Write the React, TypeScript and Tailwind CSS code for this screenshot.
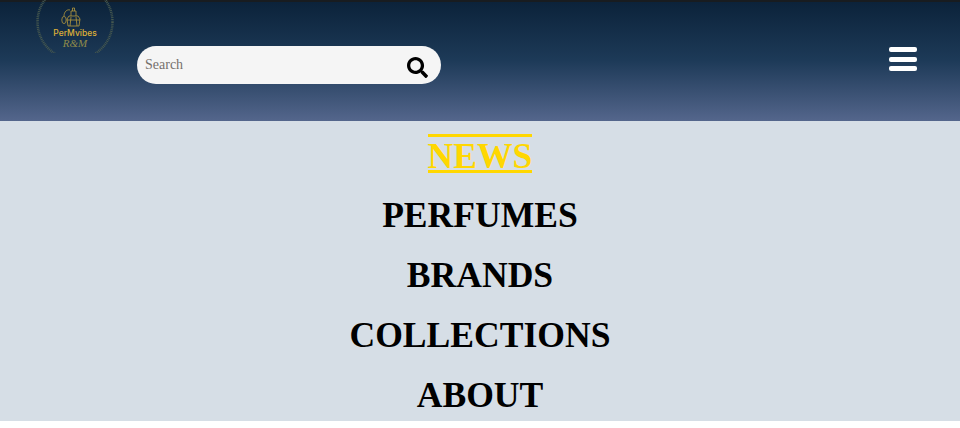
import React from 'react';
import { FaSearch } from 'react-icons/fa';

const links = ['PERFUMES', 'BRANDS', 'COLLECTIONS', 'ABOUT'];

const Logo = () => (
  <div className="relative h-[53px] w-[80px] overflow-hidden">
    <svg width="80" height="53" viewBox="0 0 80 53" className="absolute inset-0 blur-[0.3px]">
      <circle cx="40" cy="22" r="37.5" fill="none" stroke="#46584f" strokeWidth="2.5" strokeDasharray="1 0.8" />
      <g fill="none" stroke="#b89a3c" strokeWidth="0.8">
        <path d="M34 16h9l2 3-1 7H33l-1-7z" />
        <path d="M36 16v-5h5v5M37.5 11V8h2v3M32 20h13M36 17l-1 9M41 17l1 9" />
        <ellipse cx="29" cy="20" rx="2.2" ry="3.6" />
        <path d="M29 16c0-4 3-7 6-6" />
      </g>
    </svg>
    <div className="absolute inset-x-0 top-[28px] text-center font-['Inter',sans-serif] text-[8.5px] leading-[10px] font-medium text-[#dfb138]">
      PerMvibes
    </div>
    <div className="absolute inset-x-0 top-[38px] text-center font-['Liberation_Serif',serif] text-[11px] leading-[10px] italic text-[#8f8a4a]">
      R&amp;M
    </div>
  </div>
);

export default function App() {
  return (
    <div className="h-[428px] overflow-hidden bg-white font-['Liberation_Serif',serif]">
      <header className="relative flex h-[121px] items-start bg-gradient-to-b from-[#0b2239] via-[#1d3a58] to-[#54668c]">
        <div className="absolute inset-x-0 top-0 h-[2px] bg-[#181c20]" />
        <div className="ml-[35px]">
          <Logo />
        </div>
        <div className="mt-[46px] ml-[22px] flex h-[38px] w-[304px] items-center justify-between rounded-[19px] bg-[#f5f5f5] pr-[13px] pl-[8px]">
          <span className="-mt-[2px] text-[14px] text-[#75706c]">Search</span>
          <FaSearch size={21} className="mt-[5px] text-black" />
        </div>
        <div className="mt-[47px] mr-[43px] ml-auto flex w-[28px] flex-col gap-[4.5px]">
          <span className="h-[5px] rounded-[2px] bg-white" />
          <span className="h-[5px] rounded-[2px] bg-white" />
          <span className="h-[5px] rounded-[2px] bg-white" />
        </div>
      </header>
      <nav className="flex h-[300px] flex-col items-center overflow-hidden bg-[#d6dee6] pt-[13px] text-[35.6px] leading-[40px] font-bold text-black">
        <a className="h-[39px] border-y-[3px] border-[#ffd700] leading-[39px] text-[#ffd700]">NEWS</a>
        <div className="mt-[22px] flex flex-col items-center gap-5">
          {links.map((l) => (
            <a key={l}>{l}</a>
          ))}
        </div>
      </nav>
    </div>
  );
}
